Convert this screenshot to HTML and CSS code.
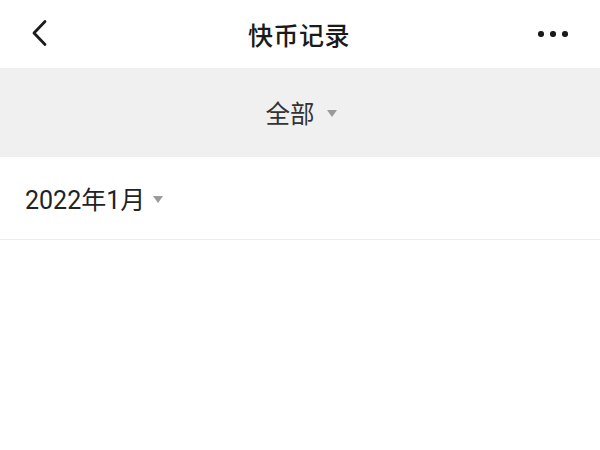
FILE: index.html
```html
<!DOCTYPE html>
<html lang="zh-CN">
<head>
<meta charset="utf-8">
<link rel="stylesheet" href="styles.css">
</head>
<body>
<div class="page">
  <header class="nav">
    <div class="nav-left">
      <svg class="back" width="20" height="30" viewBox="0 0 20 30"><polyline points="15,2.5 4,14 15,25.5" fill="none" stroke="#1c1c1c" stroke-width="2.8" stroke-linecap="round" stroke-linejoin="round"/></svg>
    </div>
    <div class="nav-title">快币记录</div>
    <div class="nav-right">
      <span class="dot"></span><span class="dot"></span><span class="dot"></span>
    </div>
  </header>
  <div class="filter">
    <span class="filter-label">全部</span>
    <span class="tri"></span>
  </div>
  <div class="month-row">
    <span class="month">2022年1月</span>
    <span class="tri"></span>
  </div>
</div>
</body>
</html>
```
FILE: styles.css
```css
html, body {
  margin: 0;
  padding: 0;
  background: #ffffff;
}
body {
  font-family: Roboto, "Noto Sans CJK SC", sans-serif;
  color: #222;
}
.page {
  width: 600px;
  height: 450px;
  overflow: hidden;
  background: #fff;
}
.nav {
  height: 68px;
  display: flex;
  align-items: center;
  justify-content: space-between;
  padding: 0 32px 0 30px;
  box-sizing: border-box;
  background: #fff;
}
.nav-left {
  width: 80px;
  display: flex;
  align-items: center;
}
.back {
  display: block;
}
.nav-title {
  font-family: "Noto Sans CJK SC", sans-serif;
  font-size: 25px;
  font-weight: 500;
  color: #1a1a1a;
  letter-spacing: 0.5px;
}
.nav-right {
  width: 80px;
  display: flex;
  justify-content: flex-end;
  align-items: center;
  gap: 6.5px;
}
.dot {
  width: 5.5px;
  height: 5.5px;
  border-radius: 50%;
  background: #1a1a1a;
}
.filter {
  height: 89px;
  background: #f0f0f0;
  display: flex;
  align-items: center;
  justify-content: center;
  gap: 12px;
  padding-left: 2px;
  box-sizing: border-box;
}
.filter-label {
  font-family: "Noto Sans CJK SC", sans-serif;
  font-size: 24.5px;
  color: #333;
}
.tri {
  width: 0;
  height: 0;
  border-left: 5.5px solid transparent;
  border-right: 5.5px solid transparent;
  border-top: 7px solid #9a9a9a;
  margin-top: 2px;
}
.month-row {
  height: 83px;
  display: flex;
  align-items: center;
  gap: 8px;
  padding-left: 25px;
  border-bottom: 1px solid #ededed;
  box-sizing: border-box;
}
.month {
  font-family: Roboto, "Noto Sans CJK SC", sans-serif;
  font-size: 25px;
  color: #222;
}
```
